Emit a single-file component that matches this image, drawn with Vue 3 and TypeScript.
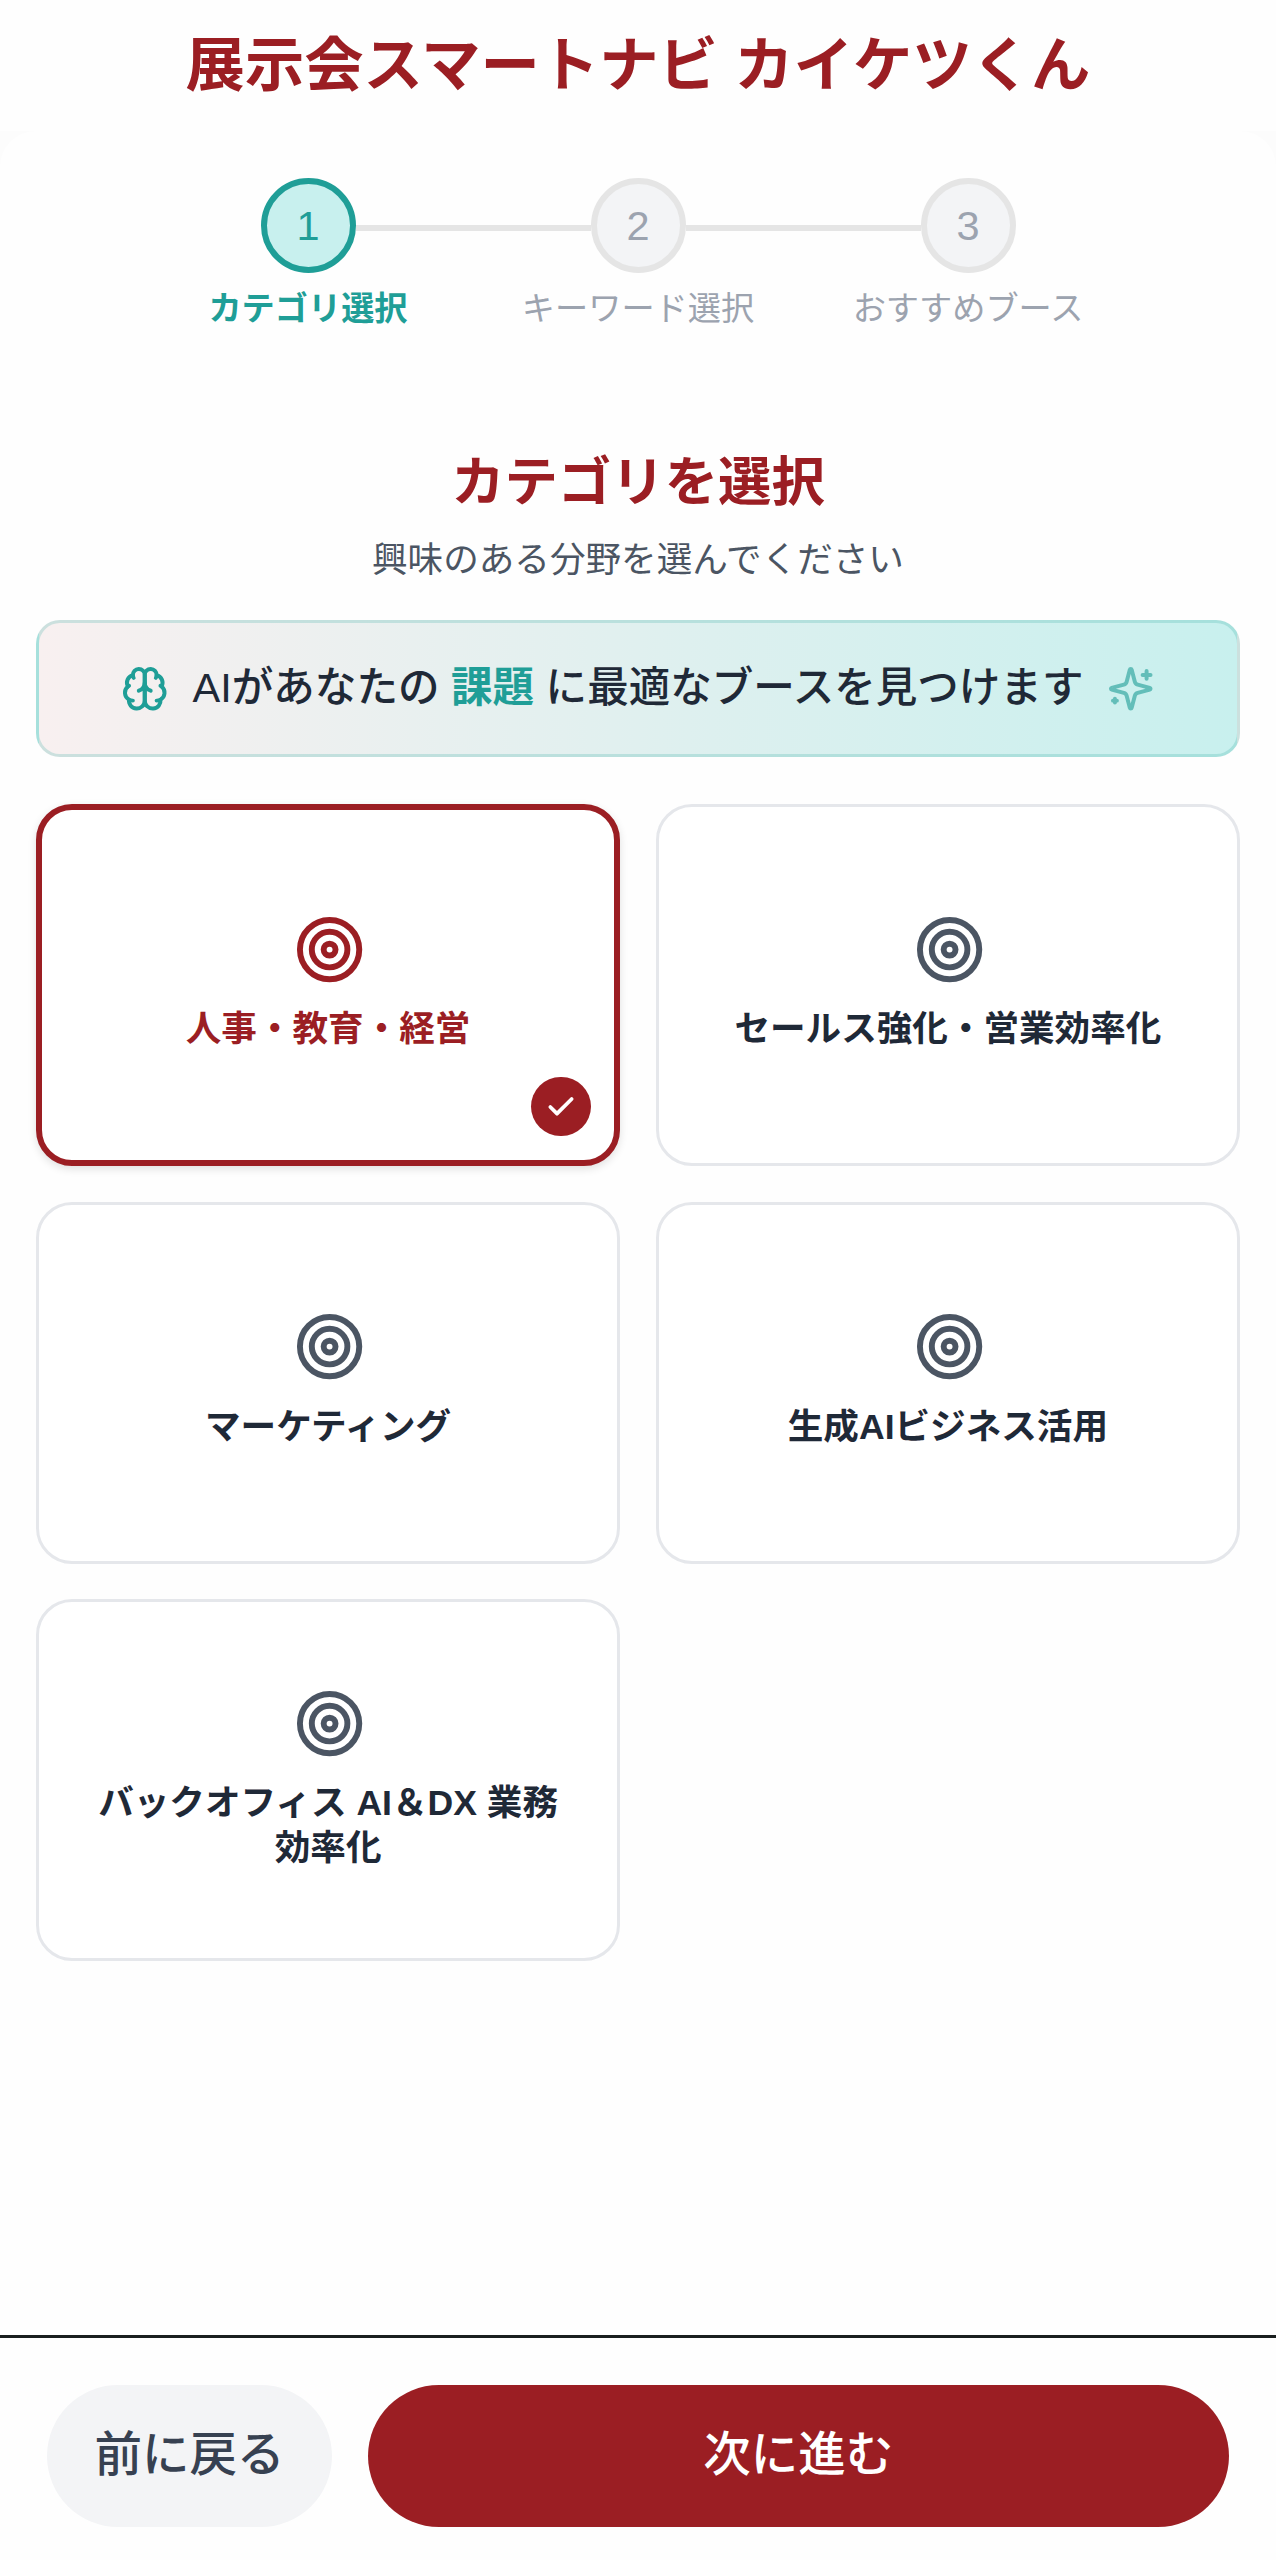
<script setup lang="ts">
import { ref } from 'vue'

interface Step {
  no: number
  label: string
}

const steps: Step[] = [
  { no: 1, label: 'カテゴリ選択' },
  { no: 2, label: 'キーワード選択' },
  { no: 3, label: 'おすすめブース' },
]
const currentStep = ref(1)

const categories: string[] = [
  '人事・教育・経営',
  'セールス強化・営業効率化',
  'マーケティング',
  '生成AIビジネス活用',
  'バックオフィス AI＆DX 業務効率化',
]
const selected = ref(categories[0])
</script>

<template>
  <div class="page">
    <header class="header">
      <h1 class="title">展示会スマートナビ カイケツくん</h1>
    </header>

    <main class="panel">
      <ol class="steps">
        <li v-for="s in steps" :key="s.no" class="step" :class="{ active: s.no === currentStep }">
          <span class="step-no">{{ s.no }}</span>
          <span class="step-label">{{ s.label }}</span>
        </li>
      </ol>

      <h2 class="heading">カテゴリを選択</h2>
      <p class="lead">興味のある分野を選んでください</p>

      <div class="banner">
        <svg class="banner-icon" viewBox="0 0 24 24">
          <path d="M12 5a3 3 0 1 0-5.997.125 4 4 0 0 0-2.526 5.77 4 4 0 0 0 .556 6.588A4 4 0 1 0 12 18Z" />
          <path d="M12 5a3 3 0 1 1 5.997.125 4 4 0 0 1 2.526 5.77 4 4 0 0 1-.556 6.588A4 4 0 1 1 12 18Z" />
          <path d="M15 13a4.5 4.5 0 0 1-3-4 4.5 4.5 0 0 1-3 4" />
          <path d="M17.599 6.5a3 3 0 0 0 .399-1.375" />
          <path d="M6.003 5.125A3 3 0 0 0 6.401 6.5" />
          <path d="M3.477 10.896a4 4 0 0 1 .585-.396" />
          <path d="M19.938 10.5a4 4 0 0 1 .585.396" />
          <path d="M6 18a4 4 0 0 1-1.967-.516" />
          <path d="M19.967 17.484A4 4 0 0 1 18 18" />
        </svg>
        <p class="banner-text">AIがあなたの <strong>課題</strong> に最適なブースを見つけます</p>
        <svg class="banner-icon faded" viewBox="0 0 24 24">
          <path d="M9.937 15.5A2 2 0 0 0 8.5 14.063l-6.135-1.582a.5.5 0 0 1 0-.962L8.5 9.936A2 2 0 0 0 9.937 8.5l1.582-6.135a.5.5 0 0 1 .963 0L14.063 8.5A2 2 0 0 0 15.5 9.937l6.135 1.581a.5.5 0 0 1 0 .964L15.5 14.063a2 2 0 0 0-1.437 1.437l-1.582 6.135a.5.5 0 0 1-.963 0z" />
          <path d="M20 3v4" />
          <path d="M22 5h-4" />
          <path d="M4 17v2" />
          <path d="M5 18H3" />
        </svg>
      </div>

      <div class="grid">
        <button
          v-for="c in categories"
          :key="c"
          type="button"
          class="card"
          :class="{ selected: c === selected }"
          @click="selected = c"
        >
          <svg class="target" viewBox="0 0 24 24">
            <circle cx="12" cy="12" r="10" />
            <circle cx="12" cy="12" r="6" />
            <circle cx="12" cy="12" r="2" />
          </svg>
          <span class="card-label">{{ c }}</span>
          <span v-if="c === selected" class="badge">
            <svg viewBox="0 0 24 24"><path d="M20 6 9 17l-5-5" /></svg>
          </span>
        </button>
      </div>
    </main>

    <footer class="footer">
      <button type="button" class="btn back">前に戻る</button>
      <button type="button" class="btn next">次に進む</button>
    </footer>
  </div>
</template>

<style>
body {
  margin: 0;
  background: #fdfdfd;
}
</style>

<style scoped>
.page {
  display: flex;
  flex-direction: column;
  box-sizing: border-box;
  width: 1276px;
  height: 2560px;
  overflow: hidden;
  background: #fcfcfc;
  color: #1f2937;
  font-family: 'Liberation Sans', 'Noto Sans CJK JP', sans-serif;
}
h1, h2, p, ol {
  margin: 0;
  padding: 0;
}
button {
  margin: 0;
  font-family: inherit;
  cursor: pointer;
}
svg {
  display: block;
  fill: none;
  stroke: currentColor;
  stroke-width: 2;
  stroke-linecap: round;
  stroke-linejoin: round;
}
.header {
  box-sizing: border-box;
  flex: none;
  height: 131px;
  padding-top: 24px;
  background: #fefefe;
  text-align: center;
}
.title {
  color: #9b1e23;
  font-size: 59.35px;
  font-weight: 700;
  line-height: 83px;
  white-space: nowrap;
}
.panel {
  flex: 1;
  box-sizing: border-box;
  padding: 47px 36px 0;
  border-radius: 36px 36px 0 0;
  background: #fefefe;
}
.steps {
  display: flex;
  justify-content: center;
  list-style: none;
}
.step {
  position: relative;
  display: flex;
  flex-direction: column;
  align-items: center;
  width: 330px;
  color: #9ca3af;
}
.step + .step::before {
  content: '';
  position: absolute;
  top: 47px;
  left: -117.5px;
  width: 235px;
  height: 6px;
  background: #e5e5e5;
}
.step-no {
  display: flex;
  align-items: center;
  justify-content: center;
  box-sizing: border-box;
  width: 95px;
  height: 95px;
  border: 6px solid #e5e5e5;
  border-radius: 50%;
  background: #f3f4f6;
  font-size: 41.5px;
}
.step-label {
  margin-top: 13px;
  font-size: 33.2px;
  line-height: 46px;
  white-space: nowrap;
}
.step.active {
  color: #1f9e97;
}
.step.active .step-no {
  border-color: #1f9e97;
  background: #c8f0ee;
}
.step.active .step-label {
  font-weight: 700;
}
.heading {
  margin-top: 114px;
  color: #9b1e23;
  font-size: 53.4px;
  font-weight: 700;
  line-height: 74px;
  text-align: center;
}
.lead {
  margin-top: 14px;
  color: #4b5563;
  font-size: 35.6px;
  line-height: 53px;
  text-align: center;
}
.banner {
  display: flex;
  align-items: center;
  justify-content: center;
  gap: 23.7px;
  box-sizing: border-box;
  height: 136.5px;
  margin-top: 33px;
  border: 3px solid rgba(31, 158, 151, 0.2);
  border-radius: 24px;
  background: linear-gradient(90deg, #f8f0f0, #c8f0ee);
}
.banner-icon {
  flex: none;
  width: 47.5px;
  height: 47.5px;
  color: #1f9e97;
}
.faded {
  opacity: 0.6;
}
.banner-text {
  font-size: 41.54px;
  font-weight: 500;
  line-height: 60px;
  white-space: nowrap;
}
.banner-text strong {
  color: #1f9e97;
  font-weight: 700;
}
.grid {
  display: grid;
  grid-template-columns: 1fr 1fr;
  gap: 35.6px;
  margin-top: 47.5px;
}
.card {
  position: relative;
  display: flex;
  flex-direction: column;
  align-items: center;
  justify-content: center;
  box-sizing: border-box;
  height: 362px;
  padding: 0 47px;
  border: 3px solid #e5e7eb;
  border-radius: 36px;
  background: #fff;
  color: #1f2937;
}
.target {
  flex: none;
  width: 71.2px;
  height: 71.2px;
  margin-bottom: 22.2px;
  margin-left: 3px;
  color: #4b5563;
}
.card-label {
  min-height: 47.4px;
  margin-bottom: 2px;
  font-size: 35.6px;
  font-weight: 700;
  line-height: 44.5px;
  text-align: center;
}
.card.selected {
  border: 6px solid #9b1e23;
  color: #9b1e23;
  box-shadow: 0 3px 9px rgba(0, 0, 0, 0.12);
}
.card.selected .target {
  color: #9b1e23;
}
.badge {
  position: absolute;
  right: 23.7px;
  bottom: 23.7px;
  display: flex;
  align-items: center;
  justify-content: center;
  width: 59.3px;
  height: 59.3px;
  border-radius: 50%;
  background: #9b1e23;
  color: #fff;
}
.badge svg {
  width: 32px;
  height: 32px;
  stroke-width: 2.8;
}
.footer {
  display: flex;
  gap: 36px;
  flex: none;
  box-sizing: border-box;
  height: 225.5px;
  padding: 47.5px 47.5px 0 47px;
  border-top: 3px solid #1a1f1f;
  background: #fefefe;
}
.btn {
  height: 142.4px;
  padding: 0 0 12px;
  border: 0;
  border-radius: 72px;
  font-size: 47.5px;
  font-weight: 500;
}
.back {
  width: 285px;
  background: #f3f4f6;
  color: #374151;
}
.next {
  flex: 1;
  background: #9b1e23;
  color: #fff;
}
</style>
